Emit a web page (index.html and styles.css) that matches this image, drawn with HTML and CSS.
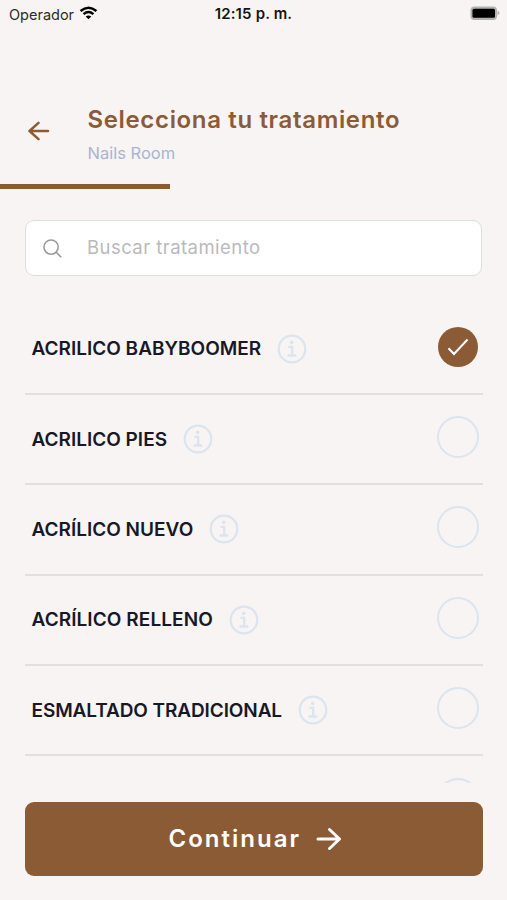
FILE: index.html
```html
<!DOCTYPE html>
<html lang="es">
<head>
<meta charset="utf-8">
<meta name="viewport" content="width=device-width, initial-scale=1">
<title>Selecciona tu tratamiento</title>
<link rel="stylesheet" href="styles.css">
</head>
<body>
<svg width="0" height="0" class="defs" aria-hidden="true">
  <symbol id="info" viewBox="0 0 30 30">
    <circle cx="15" cy="15" r="13.3" fill="none" stroke="currentColor" stroke-width="2.2"/>
    <circle cx="14.7" cy="8.4" r="1.8" fill="currentColor"/>
    <path d="M11.400 12.900H15.200V21.300M10.600 21.500H19.200" fill="none" stroke="currentColor" stroke-width="2.300"/>
  </symbol>
</svg>
<div class="screen">
  <div class="status">
    <div class="carrier"><span>Operador</span>
      <svg class="wifi" viewBox="0 0 20 15"><g fill="none" stroke="#000" stroke-width="2.6"><path d="M1.500 5.400Q10-1.600 18.500 5.400"/><path d="M4.700 8.700Q10 4.200 15.300 8.700"/></g><path d="M7 11.300Q10 9 13 11.300L10 14.300Z"/></svg>
    </div>
    <div class="clock">12:15 p. m.</div>
    <svg class="battery" viewBox="0 0 32 14"><rect x="1.500" y="0.500" width="26.500" height="13.500" rx="3.800" fill="#b3b0b0"/><path d="M28.500 4.500Q32.500 7 28.500 9.500Z" fill="#b3b0b0"/><rect x="3.500" y="2.700" width="22.500" height="9" rx="1.500"/></svg>
  </div>
  <header class="header">
    <svg class="back" viewBox="0 0 22 20"><path d="M20 10H1.500M10.500 1.800 1.500 10l9 8.200" fill="none" stroke="currentColor" stroke-width="2.500" stroke-linecap="round" stroke-linejoin="round"/></svg>
    <div>
      <h1 class="title">Selecciona tu tratamiento</h1>
      <p class="subtitle">Nails Room</p>
    </div>
  </header>
  <div class="progress"></div>
  <div class="search">
    <svg class="lens" viewBox="0 0 20 20"><g fill="none" stroke="currentColor" stroke-width="1.600"><circle cx="8.500" cy="8.500" r="7.500"/><path d="M13.800 13.800 19.200 19.200"/></g></svg>
    <span class="placeholder">Buscar tratamiento</span>
  </div>
  <main class="list">
    <div class="row"><span class="name">ACRILICO BABYBOOMER</span><svg class="info"><use href="#info"/></svg>
      <span class="radio checked"><svg viewBox="0 0 22 18"><path d="M1.500 10.200 7 16 20.500 1.500" fill="none" stroke="#fff" stroke-width="2"/></svg></span></div>
    <div class="row"><span class="name">ACRILICO PIES</span><svg class="info"><use href="#info"/></svg><span class="radio"></span></div>
    <div class="row"><span class="name">ACRÍLICO NUEVO</span><svg class="info"><use href="#info"/></svg><span class="radio"></span></div>
    <div class="row"><span class="name roomy">ACRÍLICO RELLENO</span><svg class="info"><use href="#info"/></svg><span class="radio"></span></div>
    <div class="row"><span class="name tight">ESMALTADO TRADICIONAL</span><svg class="info"><use href="#info"/></svg><span class="radio"></span></div>
    <div class="row"><span class="radio"></span></div>
  </main>
  <div class="continue"><span>Continuar</span>
    <svg viewBox="0 0 26 24"><path d="M2 12H23.500M13.500 2.500 23.500 12l-10 9.500" fill="none" stroke="currentColor" stroke-width="3" stroke-linecap="round" stroke-linejoin="round"/></svg>
  </div>
</div>
</body>
</html>
```
FILE: styles.css
```css
* { box-sizing: border-box; }
body { margin: 0; background: #f7f4f3; font-family: Inter, "Liberation Sans", sans-serif; }
.defs { display: none; }
.screen { width: 507px; height: 900px; display: flex; flex-direction: column; overflow: hidden; }
.status { height: 28px; padding: 0 6px 0 9px; display: grid; grid-template-columns: 1fr auto 1fr; align-items: center; flex: none; }
.carrier { display: flex; align-items: center; gap: 5px; font-size: 14.5px; color: #2d2b2b; }
.wifi { width: 19px; height: 14px; margin-top: -2px; }
.clock { font-size: 15px; font-weight: 600; color: #151515; letter-spacing: 0.15px; margin: -1px 3px 0 0; }
.battery { width: 32px; height: 14px; justify-self: end; margin-top: -2px; }
.header { height: 155px; padding: 75px 0 0 28px; display: flex; flex: none; color: #8b5b36; }
.back { width: 22px; height: 20px; margin: 18px 37.500px 0 0; flex: none; }
.title { margin: 0; font-size: 24px; line-height: 34px; font-weight: 600; letter-spacing: 0.650px; white-space: nowrap; }
.subtitle { margin: 5px 0 0; font-size: 16.500px; line-height: 22px; color: #aab5d0; }
.progress { width: 170px; height: 5px; background: #8b5b36; margin-top: 1px; flex: none; }
.search { height: 56px; margin: 31px 25px 0; padding: 0 18px 0 17px; display: flex; align-items: center; gap: 25px; background: #fff; border: 1px solid #e0dddf; border-radius: 9px; flex: none; }
.lens { width: 19px; height: 19px; color: #999; }
.placeholder { font-size: 18.500px; letter-spacing: 0.450px; color: #b9b9bd; margin-top: -2px; }
.list { height: 507px; margin: 0 24.500px 0 25px; padding-top: 28.500px; overflow: hidden; flex: none; }
.row { height: 90.400px; padding: 0 3.500px 0 6.500px; border-bottom: 2px solid #e2dfe0; display: flex; align-items: center; }
.name { font-size: 19px; font-weight: 600; color: #181826; white-space: nowrap; }
.roomy { letter-spacing: 0.080px; }
.tight { letter-spacing: -0.100px; }
.info { width: 30px; height: 30px; margin-left: 16px; color: #dce4ef; }
.radio { width: 42px; height: 42px; margin: -4px 0 0 auto; border: 2.400px solid #dce4ef; border-radius: 50%; flex: none; display: grid; place-items: center; }
.checked { width: 40px; height: 40px; margin-right: 1px; border: 0; background: #8b5b36; }
.checked svg { width: 22px; height: 18px; }
.continue { height: 74px; margin: 19px 24.500px 0 25px; padding-left: 3px; border-radius: 9px; background: #8b5b36; color: #fff; display: flex; align-items: center; justify-content: center; gap: 15px; font-size: 24px; font-weight: 600; letter-spacing: 2px; flex: none; }
.continue span { margin-top: -2px; }
.continue svg { width: 26px; height: 24px; }
```
